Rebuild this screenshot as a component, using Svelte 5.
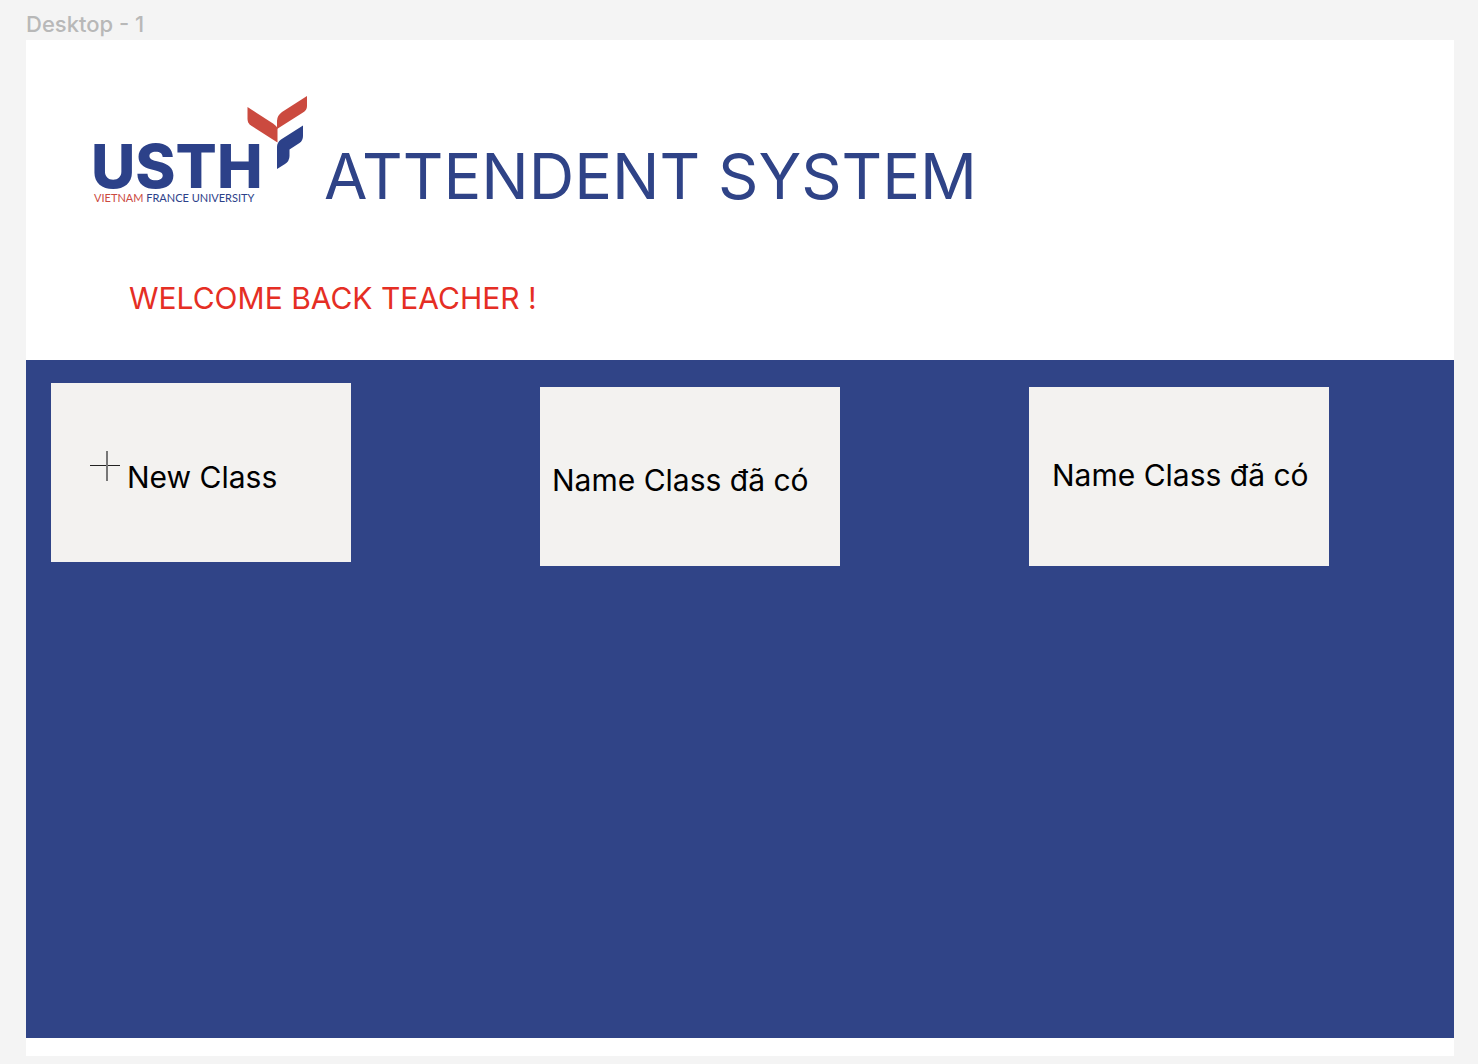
<script>
  const classes = [
    { id: 1, name: 'Name Class đã có', place: 'near' },
    { id: 2, name: 'Name Class đã có', place: 'middle' }
  ];
</script>

<div class="canvas">
  <p class="frame-label">Desktop - 1</p>
  <div class="frame">
    <header>
      <div class="brand">
        <div class="logo">
          <div class="letters">
            <span class="wordmark">USTH</span>
            <span class="tagline"><span class="red">VIETNAM</span> FRANCE UNIVERSITY</span>
          </div>
          <svg class="emblem" width="60" height="74" viewBox="0 0 60 74" aria-hidden="true">
            <path fill="#cb4a3f" d="M0.500 11 L26 27.500 Q29.500 30 30.500 32 V46.500 L4 29.500 Q0.500 27 0.500 23 Z" />
            <path fill="#cb4a3f" d="M60 0 L35 16 Q30 19.500 30 25 V33 L56 16.500 Q60 14 60 10 Z" />
            <path fill="#2c4189" d="M56 29.500 L34 43.500 Q30 46.500 30 51 V73 L38 68 Q42.500 65 42.500 60 V53.500 L52.500 47 Q56 44.500 56 40 Z" />
          </svg>
        </div>
        <h1>ATTENDENT SYSTEM</h1>
      </div>
      <p class="welcome">WELCOME BACK TEACHER !</p>
    </header>

    <main>
      <button type="button" class="card new">
        <svg class="plus" width="30" height="32" viewBox="0 0 30 32" aria-hidden="true">
          <path d="M0 14.500H30" stroke="#222" />
          <path d="M17 0V30" stroke="#777" stroke-width="2" />
        </svg>
        <span>New Class</span>
      </button>
      {#each classes as item (item.id)}
        <button type="button" class="card existing {item.place}">{item.name}</button>
      {/each}
    </main>
  </div>
</div>

<style>
  :global(body) {
    background: #f4f4f4;
  }

  .canvas {
    box-sizing: border-box;
    display: flex;
    flex-direction: column;
    min-height: 100vh;
    padding: 8px 24px 8px 26px;
    font-family: Inter, "Liberation Sans", sans-serif;
  }

  .frame-label {
    margin: 0;
    font-size: 22px;
    font-weight: 500;
    line-height: 32px;
    color: #b8b8b8;
  }

  .frame {
    flex: 1;
    display: flex;
    flex-direction: column;
    padding-bottom: 18px;
    background: #fff;
  }

  header {
    box-sizing: border-box;
    height: 320px;
    padding: 56px 65px 0;
  }

  .brand {
    display: flex;
    gap: 17px;
  }

  .logo {
    display: flex;
    height: 108px;
  }

  .letters {
    display: flex;
    flex-direction: column;
    justify-content: flex-end;
    width: 156px;
    white-space: nowrap;
    color: #2c4189;
  }

  .wordmark {
    font-size: 61px;
    font-weight: 800;
    line-height: 52px;
  }

  .tagline {
    padding-left: 3px;
    font-family: Lato, sans-serif;
    font-size: 11px;
    line-height: 12px;
  }

  .red {
    color: #cb4a3f;
  }

  h1 {
    margin: 40px 0 0;
    font-size: 63px;
    font-weight: 400;
    line-height: 80px;
    white-space: nowrap;
    color: #2f4387;
  }

  .welcome {
    margin: 62px 0 0 38px;
    font-size: 30px;
    line-height: 40px;
    color: #e52e24;
  }

  main {
    flex: 1;
    display: flex;
    align-items: flex-start;
    justify-content: space-between;
    padding: 23px 125px 24px 25px;
    background: #304487;
  }

  .card {
    box-sizing: border-box;
    display: flex;
    align-items: center;
    width: 300px;
    height: 179px;
    border: 0;
    padding: 0;
    background: #f3f2f0;
    font-family: inherit;
    font-size: 30px;
    line-height: 40px;
    color: #000;
    text-align: left;
    white-space: nowrap;
    cursor: pointer;
  }

  .new {
    align-items: flex-start;
    gap: 7px;
    padding: 68px 0 0 39px;
  }

  .new span {
    margin-top: 6px;
  }

  .existing {
    margin-top: 4px;
  }

  .near {
    padding: 6px 0 0 12px;
  }

  .middle {
    padding: 0 0 4px 23px;
  }
</style>
